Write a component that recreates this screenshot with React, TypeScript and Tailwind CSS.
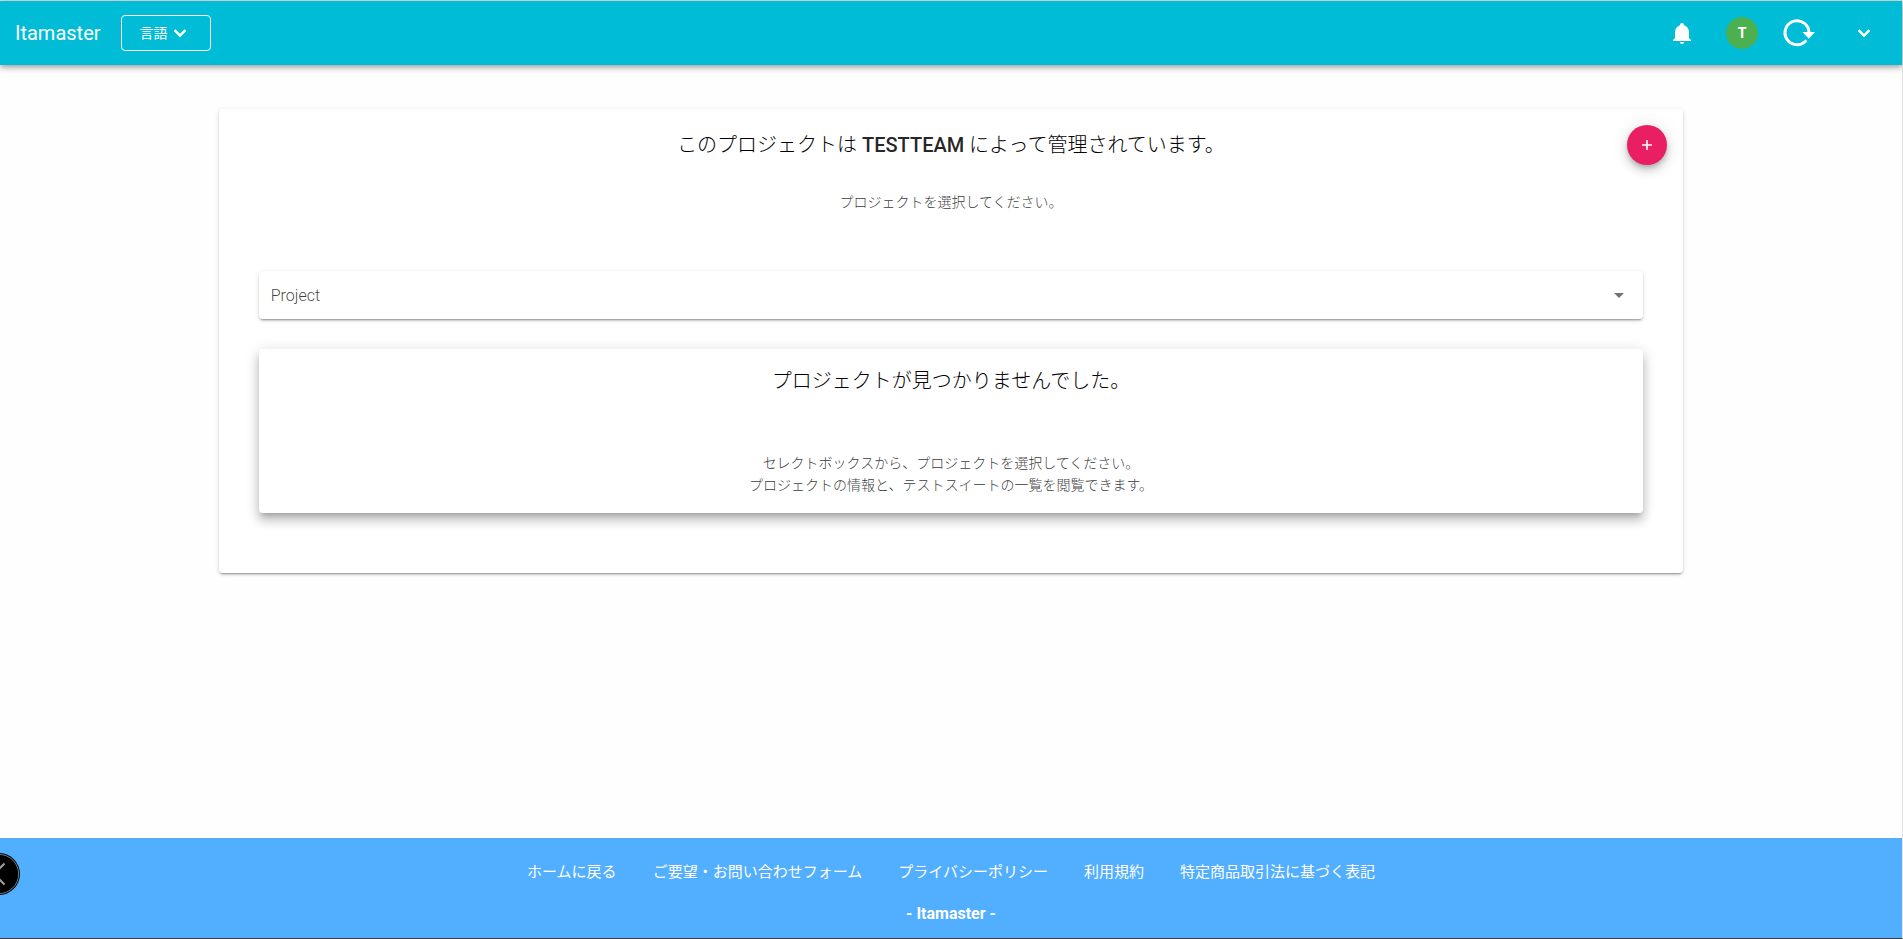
import React from "react";

const CHEVRON =
  "M7.41 8.58 12 13.17l4.59-4.59L18 10l-6 6-6-6z";

function Chevron() {
  return (
    <svg viewBox="0 0 24 24" className="size-6 shrink-0" fill="currentColor" stroke="currentColor" strokeWidth="0.6" strokeLinejoin="round" aria-hidden="true">
      <path d={CHEVRON} />
    </svg>
  );
}

function Header() {
  return (
    <header className="z-10 flex h-16 items-center bg-[#00bcd7] pr-5 pl-[15px] text-white shadow-[0_2px_4px_-1px_rgba(0,0,0,.2),0_4px_5px_0_rgba(0,0,0,.14),0_1px_10px_0_rgba(0,0,0,.12)]">
      <h1 className="text-xl leading-6">Itamaster</h1>
      <button type="button" className="ml-5 flex h-9 w-[90px] items-center justify-center rounded border border-white text-sm">
        <span>言語</span>
        <Chevron />
      </button>
      <div className="ml-auto flex items-center">
        <button type="button" aria-label="通知" className="flex size-9 items-center justify-center">
          <svg viewBox="0 0 24 24" className="size-6" fill="currentColor" aria-hidden="true">
            <path d="M21 19v1H3v-1l2-2v-6c0-3.1 2.03-5.83 5-6.71V4a2 2 0 0 1 4 0v.29c2.97.88 5 3.61 5 6.71v6l2 2m-7 2a2 2 0 0 1-4 0" />
          </svg>
        </button>
        <span className="ml-[26px] flex size-8 items-center justify-center rounded-full bg-[#4caf50] text-sm font-bold">T</span>
        <button type="button" aria-label="更新" className="ml-6 flex size-8 items-center justify-center">
          <svg viewBox="0 0 32 32" className="size-8 overflow-visible" fill="none" aria-hidden="true">
            <path d="M23.5 24.2A12 12 0 1 1 27 15.5" stroke="currentColor" strokeWidth="3" strokeLinecap="round" />
            <path d="M20.5 15h12.5l-6.2 6.8z" fill="currentColor" />
          </svg>
        </button>
        <button type="button" aria-label="メニュー" className="ml-8 flex size-9 items-center justify-center">
          <Chevron />
        </button>
      </div>
    </header>
  );
}

function ProjectSelect() {
  return (
    <div className="relative mt-[58px] rounded bg-white shadow-[0_3px_1px_-2px_rgba(0,0,0,.2),0_2px_2px_0_rgba(0,0,0,.14),0_1px_5px_0_rgba(0,0,0,.12)]">
      <select aria-label="Project" defaultValue="" className="block h-12 w-full appearance-none rounded bg-transparent px-3 pt-0.5 text-base font-light text-black/75">
        <option value="">Project</option>
      </select>
      <svg viewBox="0 0 24 24" className="pointer-events-none absolute top-3 right-3 size-6 text-black/55" fill="currentColor" aria-hidden="true">
        <path d="M7 10l5 5 5-5z" />
      </svg>
    </div>
  );
}

function ProjectCard() {
  return (
    <section className="relative rounded bg-white px-10 pt-5 pb-[60px] text-center shadow-[0_3px_1px_-2px_rgba(0,0,0,.2),0_2px_2px_0_rgba(0,0,0,.14),0_1px_5px_0_rgba(0,0,0,.12)]">
      <h2 className="text-xl leading-8 font-light text-black">
        このプロジェクトは <strong className="font-medium text-black/87">TESTTEAM</strong> によって管理されています。
      </h2>
      <button type="button" aria-label="プロジェクトを追加" className="absolute top-4 right-4 flex size-10 items-center justify-center rounded-full bg-[#e91e63] text-white shadow-[0_3px_5px_-1px_rgba(0,0,0,.2),0_6px_10px_0_rgba(0,0,0,.14),0_1px_18px_0_rgba(0,0,0,.12)]">
        <svg viewBox="0 0 12 12" className="size-3" stroke="currentColor" strokeWidth="1.6" aria-hidden="true">
          <path d="M6 1v10M1 6h10" />
        </svg>
      </button>
      <p className="mt-[30px] text-sm leading-[22px] font-light text-black/80">プロジェクトを選択してください。</p>
      <ProjectSelect />
      <div className="mt-[30px] rounded bg-white px-4 pt-4 pb-[17px] shadow-[0_5px_5px_-3px_rgba(0,0,0,.2),0_8px_10px_1px_rgba(0,0,0,.14),0_3px_14px_2px_rgba(0,0,0,.12)]">
        <h3 className="text-xl leading-8 font-light text-black">プロジェクトが見つかりませんでした。</h3>
        <p className="mt-[55px] text-sm leading-[22px] font-light text-black/80">
          セレクトボックスから、プロジェクトを選択してください。
          <br />
          プロジェクトの情報と、テストスイートの一覧を閲覧できます。
        </p>
      </div>
    </section>
  );
}

const LINKS = [
  "ホームに戻る",
  "ご要望・お問い合わせフォーム",
  "プライバシーポリシー",
  "利用規約",
  "特定商品取引法に基づく表記",
];

function Footer() {
  return (
    <footer className="relative flex h-[100px] flex-col items-center overflow-hidden bg-[#52aeff] pt-[22px] text-white">
      <nav className="flex gap-9 text-[15px] leading-6">
        {LINKS.map((label) => (
          <a key={label} href="#">{label}</a>
        ))}
      </nav>
      <strong className="mt-[18px] text-base leading-6 font-bold">- Itamaster -</strong>
      <button type="button" aria-label="開く" className="absolute top-[15px] -left-[22px] size-[42px] rounded-full">
        <svg viewBox="0 0 42 42" className="size-full" fill="none" aria-hidden="true">
          <circle cx="21" cy="21" r="21" fill="#000" />
          <circle cx="21" cy="21" r="19.6" stroke="#7d8a8a" strokeWidth="0.9" />
          <path d="M26.5 10.5L16 21l10.5 10.5" stroke="#a0a0a0" strokeWidth="2" />
        </svg>
      </button>
    </footer>
  );
}

export default function App() {
  return (
    <div className="flex min-h-screen flex-col border-t border-r border-b border-t-[#d8d8d8] border-r-[#e4e4e4] border-b-[#3c3c3c] bg-[#fefefe] font-['Roboto','Noto_Sans_CJK_JP',sans-serif]">
      <Header />
      <main className="flex-1 px-[11.5%] py-11">
        <ProjectCard />
      </main>
      <Footer />
    </div>
  );
}
